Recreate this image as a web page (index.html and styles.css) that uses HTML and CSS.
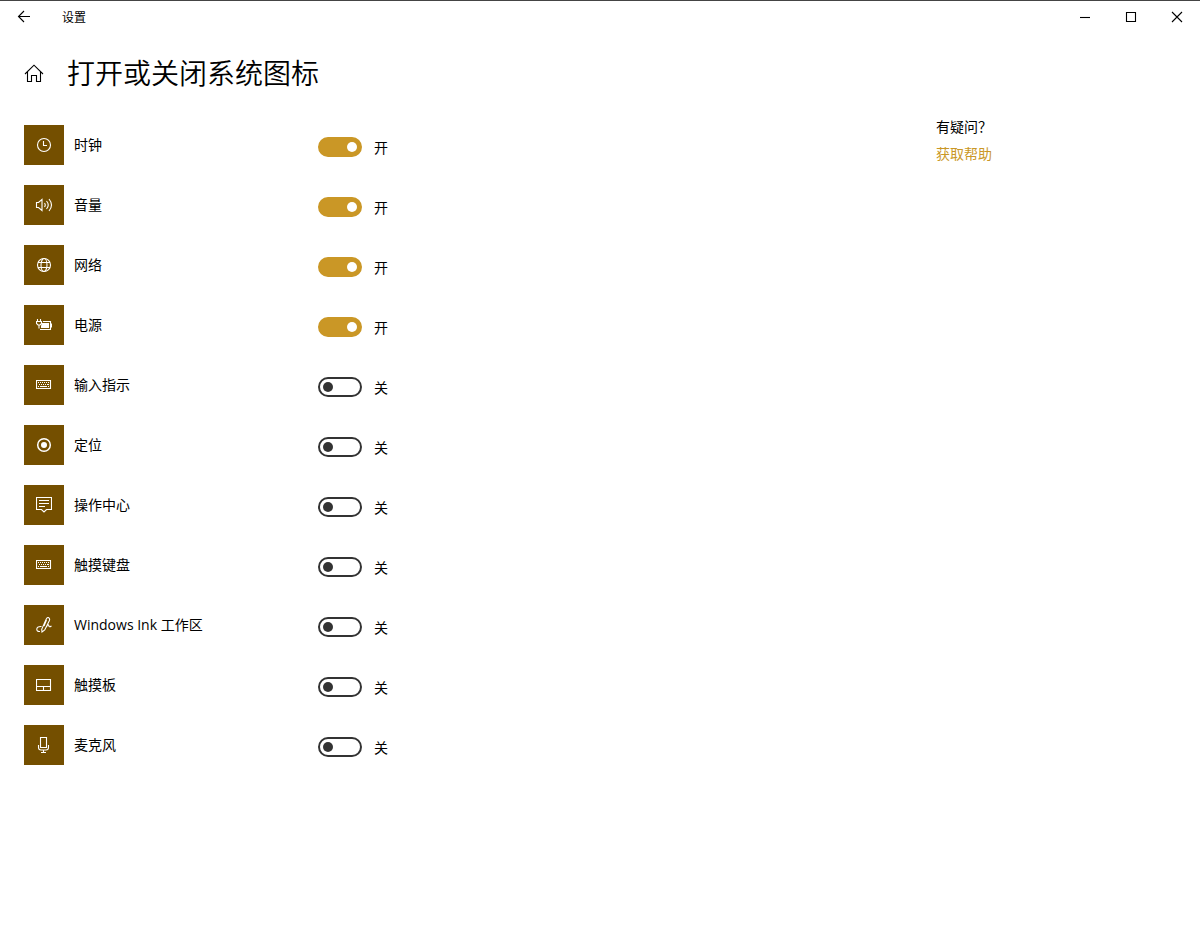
FILE: index.html
```html
<!DOCTYPE html>
<html lang="zh-CN">
<head>
<meta charset="utf-8">
<meta name="viewport" content="width=device-width, initial-scale=1">
<title>设置</title>
<link rel="stylesheet" href="styles.css">
</head>
<body>
<svg class="sprite" aria-hidden="true">
  <symbol id="keyboard" viewBox="0 0 16 16">
    <path d="M.5 3.5h14v8H.5z"/>
    <path d="M2 5.500h1m1 0h1m1 0h1m1 0h1m1 0h1m1 0h1M3 7.500h1m1 0h1m1 0h1m1 0h1m1 0h2M2 9.500h1m1 0h7m1 0h1"/>
  </symbol>
</svg>
<header class="titlebar">
  <button class="titlebar-button back" type="button" aria-label="后退"><svg class="icon" viewBox="0 0 16 16"><path d="M14 7.500H2.500M8 2L2.500 7.500 8 13"/></svg></button>
  <span class="window-title">设置</span>
  <div class="window-controls">
    <button class="titlebar-button" type="button" aria-label="最小化"><svg class="icon" viewBox="0 0 16 16"><path d="M3 8.500h10"/></svg></button>
    <button class="titlebar-button" type="button" aria-label="最大化"><svg class="icon" viewBox="0 0 16 16"><path d="M3.500 3.500h9v9h-9z"/></svg></button>
    <button class="titlebar-button" type="button" aria-label="关闭"><svg class="icon" viewBox="0 0 16 16"><path d="M3 3l10 10M13 3L3 13"/></svg></button>
  </div>
</header>
<div class="page-header">
  <a class="home" href="#" aria-label="主页"><svg class="home-icon" viewBox="0 0 20 20"><path d="M1 11L10 2.200l9 8.800M3.500 9v9.500h4v-6h5v6h4V9"/></svg></a>
  <h1 class="page-title">打开或关闭系统图标</h1>
</div>
<div class="content">
  <main class="settings">
    <div class="setting">
      <span class="tile"><svg class="icon" viewBox="0 0 16 16"><circle cx="8" cy="8" r="6.500"/><path d="M7.500 4v4.500H11"/></svg></span>
      <label class="name" for="clock">时钟</label>
      <input class="toggle" type="checkbox" role="switch" id="clock" checked><span class="state">开</span>
    </div>
    <div class="setting">
      <span class="tile"><svg class="icon wide" viewBox="0 0 18 16"><path d="M1.500 5.500h2l3.500-3v11l-3.500-3h-2zM9.500 6q1.500 2 0 4M11.500 4q3.500 4 0 8M14 2q5 6 0 12"/></svg></span>
      <label class="name" for="volume">音量</label>
      <input class="toggle" type="checkbox" role="switch" id="volume" checked><span class="state">开</span>
    </div>
    <div class="setting">
      <span class="tile"><svg class="icon" viewBox="0 0 16 16"><circle cx="8" cy="8" r="6.500"/><ellipse cx="8" cy="8" rx="3" ry="6.500"/><path d="M2 5.500h12M2 10.500h12"/></svg></span>
      <label class="name" for="network">网络</label>
      <input class="toggle" type="checkbox" role="switch" id="network" checked><span class="state">开</span>
    </div>
    <div class="setting">
      <span class="tile"><svg class="icon" viewBox="0 0 16 16"><path d="M1.500 2v2M4.500 2v2M.500 4.500h5v2l-1.500 1.500h-2L.500 6.500zM3 8v3.500M7 4.500h7.500v8H4M15.500 6.500v4"/><path class="solid" d="M6 6h7v5H5V9z"/></svg></span>
      <label class="name" for="power">电源</label>
      <input class="toggle" type="checkbox" role="switch" id="power" checked><span class="state">开</span>
    </div>
    <div class="setting">
      <span class="tile"><svg class="icon"><use href="#keyboard"/></svg></span>
      <label class="name" for="input">输入指示</label>
      <input class="toggle" type="checkbox" role="switch" id="input"><span class="state">关</span>
    </div>
    <div class="setting">
      <span class="tile"><svg class="icon ring" viewBox="0 0 16 16"><circle cx="8" cy="8" r="6.300"/><circle class="solid" cx="8" cy="8" r="3"/></svg></span>
      <label class="name" for="location">定位</label>
      <input class="toggle" type="checkbox" role="switch" id="location"><span class="state">关</span>
    </div>
    <div class="setting">
      <span class="tile"><svg class="icon" viewBox="0 0 16 16"><path d="M.500.500h15v12h-5L8 15l-2.500-2.500h-5zM3 3.500h10M3 6.500h10M3 9.500h6"/></svg></span>
      <label class="name" for="action">操作中心</label>
      <input class="toggle" type="checkbox" role="switch" id="action"><span class="state">关</span>
    </div>
    <div class="setting">
      <span class="tile"><svg class="icon"><use href="#keyboard"/></svg></span>
      <label class="name" for="touch-keyboard">触摸键盘</label>
      <input class="toggle" type="checkbox" role="switch" id="touch-keyboard"><span class="state">关</span>
    </div>
    <div class="setting">
      <span class="tile"><svg class="icon" viewBox="0 0 16 16"><path d="M6 15L5.700 12.300 10.300 2q1.200-2 2.400-1.300 1.500 1 .600 3L8.700 13zM10.500 3L8 9M5.500 9.500Q1 9.300.800 12T4 14.500M10.500 10c1-2.500 2-2.800 2.300-1.300s1 1.300 2.700.300"/></svg></span>
      <label class="name" for="ink">Windows Ink 工作区</label>
      <input class="toggle" type="checkbox" role="switch" id="ink"><span class="state">关</span>
    </div>
    <div class="setting">
      <span class="tile"><svg class="icon" viewBox="0 0 16 16"><path d="M.500 2.500h14v11H.500zM.500 9.500h14M7.500 9.500v4"/></svg></span>
      <label class="name" for="touchpad">触摸板</label>
      <input class="toggle" type="checkbox" role="switch" id="touchpad"><span class="state">关</span>
    </div>
    <div class="setting">
      <span class="tile"><svg class="icon" viewBox="0 0 16 16"><path d="M4.500.500h6v10h-6zM2.500 8v2.500q0 2.500 2.500 2.500h5q2.500 0 2.500-2.500V8M7.500 13v2.500M5 15.500h5"/></svg></span>
      <label class="name" for="microphone">麦克风</label>
      <input class="toggle" type="checkbox" role="switch" id="microphone"><span class="state">关</span>
    </div>
  </main>
  <aside class="help">
    <h2 class="help-title">有疑问？</h2>
    <a class="help-link" href="#">获取帮助</a>
  </aside>
</div>
</body>
</html>
```
FILE: styles.css
```css
* {
  box-sizing: border-box;
}

body {
  margin: 0;
  border-top: 1px solid #444;
  background: #fff;
  color: #000;
  font-family: "Open Sans", "Noto Sans CJK SC", sans-serif;
  font-size: 14px;
  line-height: 20px;
}

.sprite {
  display: none;
}

.icon {
  display: block;
  width: 16px;
  height: 16px;
}

.icon.wide {
  width: 18px;
}

svg {
  fill: none;
  stroke: currentColor;
  stroke-width: 1.1;
}

.ring {
  stroke-width: 1.5;
}

.solid {
  fill: currentColor;
  stroke: none;
}

.titlebar {
  display: flex;
  align-items: center;
  height: 32px;
}

.titlebar-button {
  display: flex;
  align-items: center;
  justify-content: center;
  width: 46px;
  height: 32px;
  padding: 0;
  border: 0;
  background: transparent;
  color: #000;
}

.back {
  width: 48px;
}

.window-title {
  padding-top: 2px;
  margin-left: 14px;
  font-size: 12px;
}

.window-controls {
  display: flex;
  margin-left: auto;
}

.page-header {
  display: flex;
  align-items: center;
  gap: 23px;
  padding: 20px 24px 0;
}

.home {
  color: #000;
}

.home-icon {
  display: block;
  width: 20px;
  height: 20px;
}

.page-title {
  margin: 0;
  font-size: 28px;
  font-weight: 350;
  line-height: 40px;
}

.content {
  display: flex;
  justify-content: space-between;
  padding: 32px 24px;
}

.settings {
  display: grid;
  gap: 20px;
}

.setting {
  display: grid;
  grid-template-columns: 40px 254px 44px auto;
  align-items: center;
}

.tile {
  display: grid;
  place-items: center;
  width: 40px;
  height: 40px;
  background: #744f00;
  color: #fff;
}

.name {
  padding-left: 10px;
}

.toggle {
  display: flex;
  align-items: center;
  appearance: none;
  width: 44px;
  height: 20px;
  margin: 4px 0 0;
  padding: 0 3px;
  border: 2px solid #333;
  border-radius: 10px;
  background: #fff;
}

.toggle::before {
  content: "";
  width: 10px;
  height: 10px;
  border-radius: 50%;
  background: #333;
}

.toggle:checked {
  justify-content: flex-end;
  border-color: #ca9726;
  background: #ca9726;
}

.toggle:checked::before {
  background: #fff;
}

.state {
  padding: 6px 0 0 12px;
}

.help {
  width: 240px;
}

.help-title {
  margin: -8px 0 7px;
  font-size: 14px;
  font-weight: 400;
  line-height: 20px;
}

.help-link {
  color: #ca9726;
  text-decoration: none;
}
```
